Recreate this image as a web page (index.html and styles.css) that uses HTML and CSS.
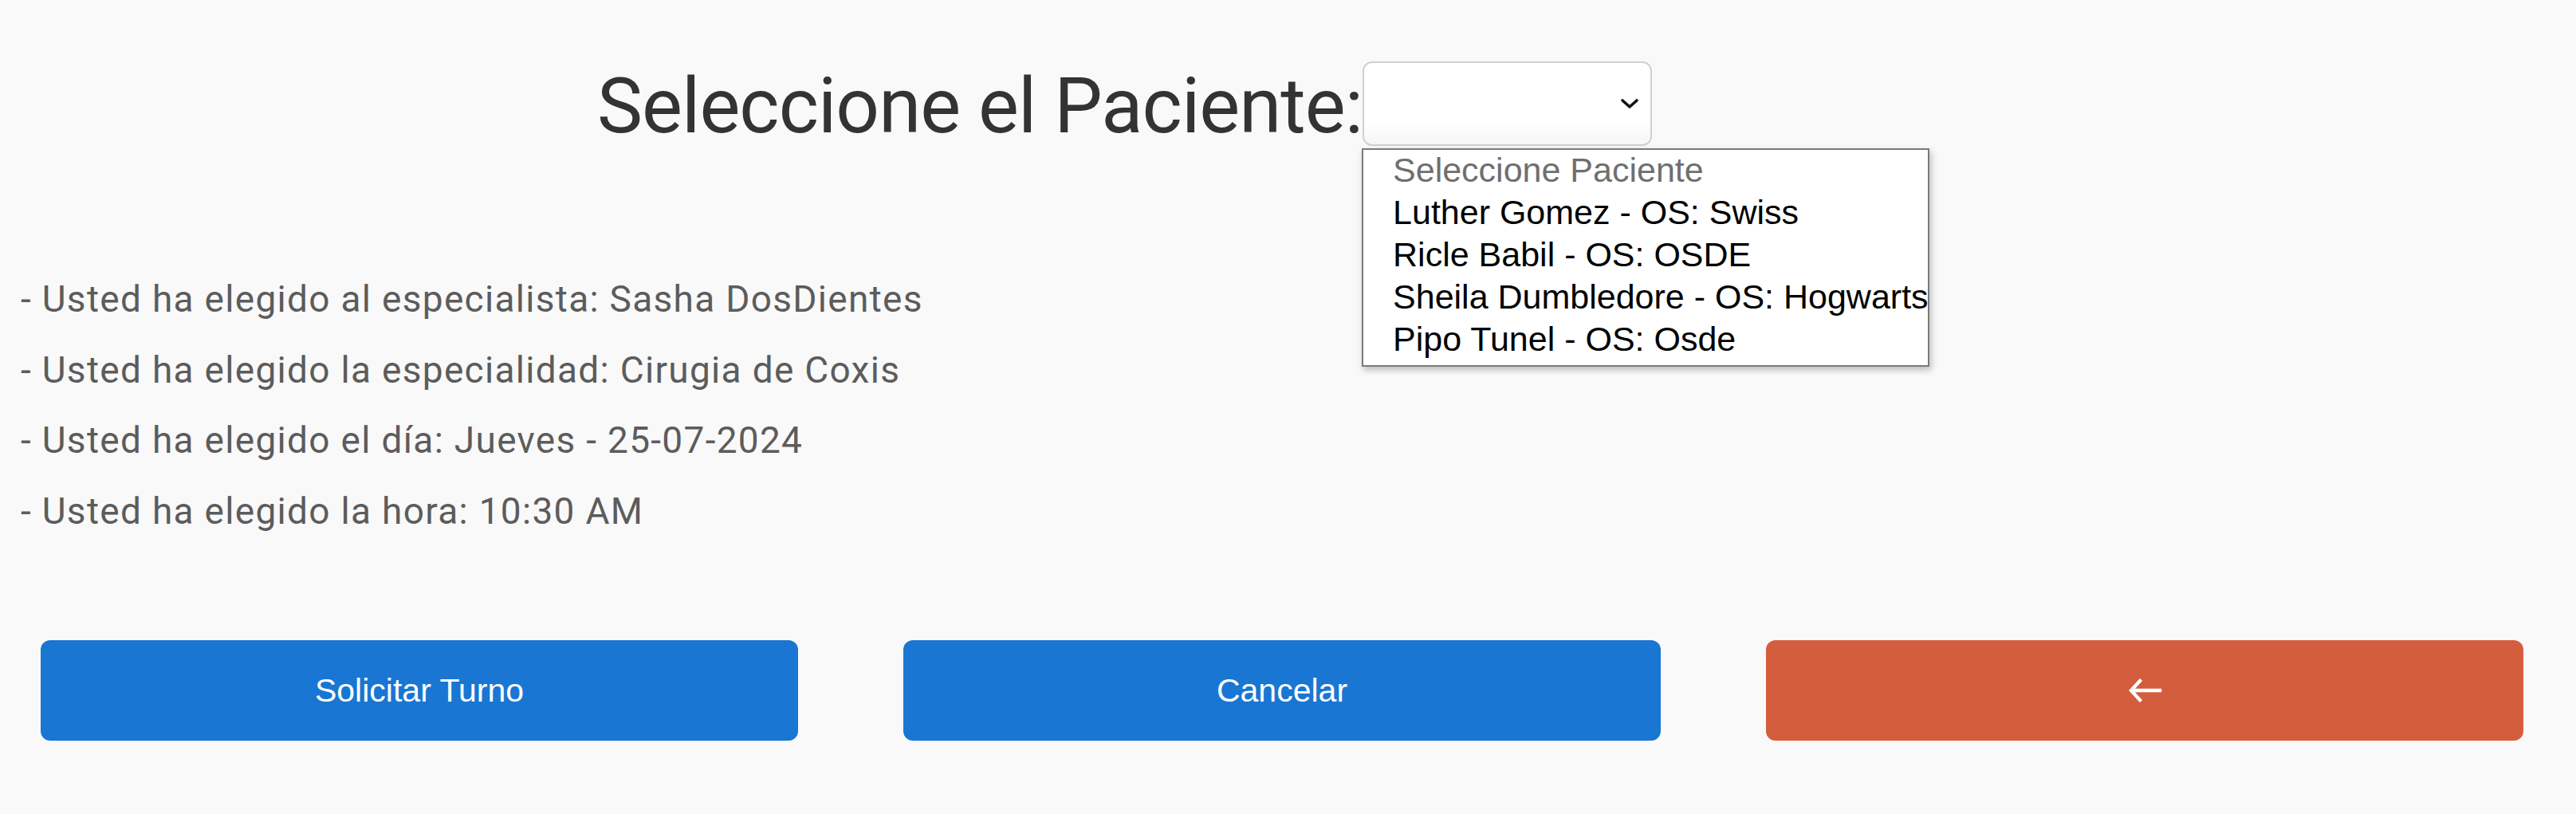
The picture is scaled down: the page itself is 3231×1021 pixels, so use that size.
FILE: index.html
```html
<!DOCTYPE html>
<html lang="es">
<head>
<meta charset="utf-8">
<title>Solicitar Turno</title>
<link rel="stylesheet" href="styles.css">
</head>
<body>
<main class="page">
  <div class="title-row">
    <h1 class="title">Seleccione el Paciente:</h1>
    <div class="select-wrap">
      <div class="select">
        <svg class="chev" viewBox="0 0 24 14" width="24" height="14"><path d="M3 3 L12 11 L21 3" fill="none" stroke="#111" stroke-width="3.6" stroke-linecap="round" stroke-linejoin="round"/></svg>
      </div>
      <ul class="options">
        <li class="opt placeholder">Seleccione Paciente</li>
        <li class="opt">Luther Gomez - OS: Swiss</li>
        <li class="opt">Ricle Babil - OS: OSDE</li>
        <li class="opt">Sheila Dumbledore - OS: Hogwarts</li>
        <li class="opt">Pipo Tunel - OS: Osde</li>
      </ul>
    </div>
  </div>

  <section class="info">
    <p class="line">- Usted ha elegido al especialista: Sasha DosDientes</p>
    <p class="line">- Usted ha elegido la especialidad: Cirugia de Coxis</p>
    <p class="line">- Usted ha elegido el día: Jueves - 25-07-2024</p>
    <p class="line">- Usted ha elegido la hora: 10:30 AM</p>
  </section>

  <div class="actions">
    <button class="btn btn-blue">Solicitar Turno</button>
    <button class="btn btn-blue">Cancelar</button>
    <button class="btn btn-red" aria-label="Volver">
      <svg class="arrow" viewBox="0 0 44 32" width="44" height="32"><path d="M41 16 H6 M16 4 L5 16 L16 28" fill="none" stroke="#fff" stroke-width="4.4" stroke-linecap="square" stroke-linejoin="miter"/></svg>
    </button>
  </div>
</main>
</body>
</html>
```

FILE: styles.css
```css
html, body {
  margin: 0;
  padding: 0;
  background: #f9f9f9;
}

.page {
  width: 3231px;
  height: 1021px;
  box-sizing: border-box;
  padding-top: 77px;
  font-family: Roboto, "Liberation Sans", sans-serif;
}

.title-row {
  display: flex;
  align-items: flex-start;
  padding-left: 749px;
}

.title {
  margin: 0;
  font-family: Roboto, sans-serif;
  font-weight: 400;
  font-size: 96px;
  line-height: 112px;
  color: #333333;
  letter-spacing: -0.95px;
}

.select-wrap {
  position: relative;
}

.select {
  width: 363px;
  height: 106px;
  box-sizing: border-box;
  border: 2px solid #d0d0d0;
  border-radius: 12px;
  background: linear-gradient(#ffffff 70%, #f6f6f6);
  display: flex;
  align-items: center;
  justify-content: flex-end;
  padding-right: 14px;
}

.chev {
  display: block;
}

.options {
  position: absolute;
  left: -1px;
  top: 109px;
  width: 712px;
  margin: 0;
  padding: 0 0 5px 0;
  list-style: none;
  box-sizing: border-box;
  border: 2px solid #7a7a7a;
  background: #ffffff;
  box-shadow: 2px 4px 8px rgba(0, 0, 0, 0.25);
  font-family: "Liberation Sans", Arial, sans-serif;
}

.opt {
  height: 53px;
  line-height: 50px;
  padding-left: 37px;
  font-size: 43px;
  color: #000000;
  white-space: nowrap;
}

.opt.placeholder {
  color: #6f6f6f;
}

.info {
  margin-top: 159px;
  padding-left: 26px;
}

.line {
  margin: 0 0 34.7px 0;
  font-family: Roboto, sans-serif;
  font-size: 46px;
  line-height: 54px;
  letter-spacing: 1.3px;
  color: #5c5c5c;
}

.actions {
  display: flex;
  gap: 132px;
  padding-left: 51px;
  margin-top: 135px;
}

.btn {
  width: 950px;
  height: 126px;
  border: 0;
  border-radius: 12px;
  color: #ffffff;
  font-family: "Liberation Sans", Arial, sans-serif;
  font-size: 41px;
  display: flex;
  align-items: center;
  justify-content: center;
  padding: 0;
}

.btn-blue {
  background: #1976d3;
}

.btn-red {
  background: #d45d3d;
}

.arrow {
  display: block;
}
```
